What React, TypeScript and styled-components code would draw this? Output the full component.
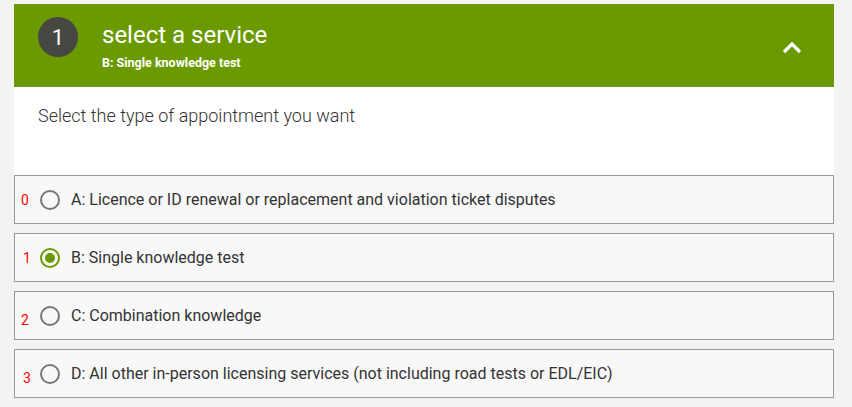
import styled, { createGlobalStyle } from "styled-components";

const GlobalStyle = createGlobalStyle`
    body {
        margin: 0;
        background: #f3f3f3;
        font-family: Roboto, "Liberation Sans", sans-serif;
    }
`

const Page = styled.div`
    padding: 4px 18px 0 14px;
    width: 820px;
`
const Header = styled.div`
    background: #6a9a00;
    height: 83px;
    display: flex;
    align-items: flex-start;
    padding: 13px 24px 0 24px;
    box-sizing: border-box;
    color: #fff;
`
const StepNumber = styled.div`
    width: 40px;
    height: 40px;
    border-radius: 50%;
    background: #464741;
    display: flex;
    align-items: center;
    justify-content: center;
    font-size: 22px;
    flex-shrink: 0;
`
const HeaderText = styled.div`
    margin-left: 24px;
    flex: 1;
`
const Title = styled.div`
    font-size: 24px;
    line-height: 28px;
    margin-top: 4px;
`
const Subtitle = styled.div`
    font-size: 12.5px;
    font-weight: 700;
    margin-top: 6px;
`
const Chevron = styled.svg`
    width: 20px;
    height: 14px;
    margin-top: 24px;
    margin-right: 8px;
`
const Intro = styled.div`
    background: #fff;
    height: 88px;
    padding: 18px 24px 0 24px;
    box-sizing: border-box;
    font-size: 18px;
    font-weight: 300;
    color: #333;
`
const Options = styled.div`
    display: flex;
    flex-direction: column;
    gap: 9px;
`
const Option = styled.label`
    height: 49px;
    box-sizing: border-box;
    border: 1px solid #999;
    background: #f8f8f8;
    display: flex;
    align-items: center;
    font-size: 16px;
    color: #333;
    cursor: pointer;
`
const Index = styled.span<{ $drop: number; $shift: number }>`
    width: 25px;
    box-sizing: border-box;
    padding-left: ${({ $shift }) => 6 + $shift}px;
    color: #f00;
    font-size: 14px;
    margin-top: ${({ $drop }) => $drop}px;
    flex-shrink: 0;
`
const Radio = styled.span<{ $checked?: boolean }>`
    width: 20px;
    height: 20px;
    box-sizing: border-box;
    border-radius: 50%;
    border: 2px solid ${({ $checked }) => ($checked ? "#6a9a00" : "#777")};
    display: flex;
    align-items: center;
    justify-content: center;
    margin-right: 11px;
    flex-shrink: 0;
    &::after {
        content: "";
        width: 10px;
        height: 10px;
        border-radius: 50%;
        background: #6a9a00;
        display: ${({ $checked }) => ($checked ? "block" : "none")};
    }
`

const services = [
    { label: "A: Licence or ID renewal or replacement and violation ticket disputes", drop: 0, shift: 0 },
    { label: "B: Single knowledge test", drop: 0, shift: 2 },
    { label: "C: Combination knowledge", drop: 8, shift: 0 },
    { label: "D: All other in-person licensing services (not including road tests or EDL/EIC)", drop: 8, shift: 2 },
]

export default function App() {
    const selected = 1;
    return (
        <Page>
            <GlobalStyle />
            <Header>
                <StepNumber>1</StepNumber>
                <HeaderText>
                    <Title>select a service</Title>
                    <Subtitle>B: Single knowledge test</Subtitle>
                </HeaderText>
                <Chevron viewBox="0 0 20 14">
                    <path d="M2 11 L10 3 L18 11" fill="none" stroke="#fff" strokeWidth="3.2" />
                </Chevron>
            </Header>
            <Intro>Select the type of appointment you want</Intro>
            <Options>
                {services.map((s, i) => (
                    <Option key={s.label}>
                        <Index $drop={s.drop} $shift={s.shift}>{i}</Index>
                        <Radio $checked={i === selected} />
                        {s.label}
                    </Option>
                ))}
            </Options>
        </Page>
    )
}
